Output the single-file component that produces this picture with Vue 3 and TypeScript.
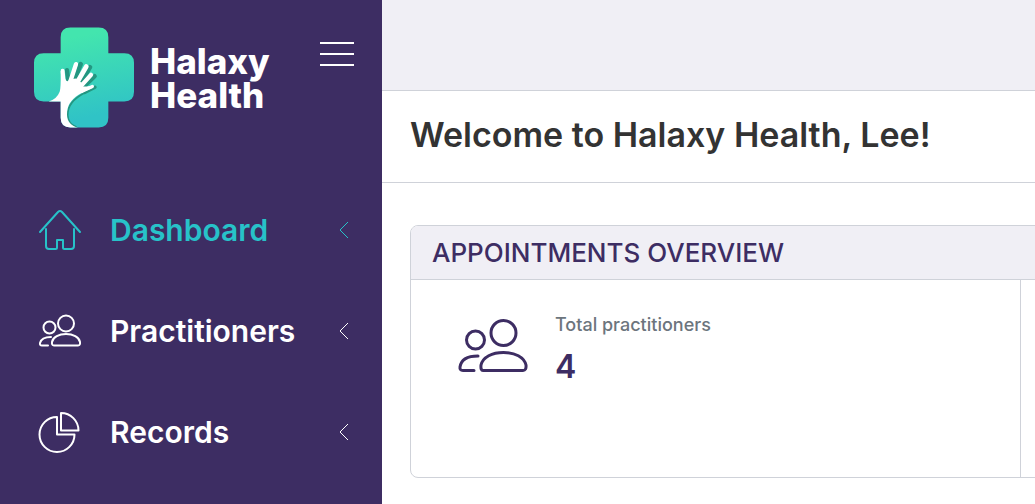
<script setup lang="ts">
import { ref } from 'vue'

type IconName = 'home' | 'people' | 'chart'

interface NavItem {
  label: string
  icon: IconName
}

const items: NavItem[] = [
  { label: 'Dashboard', icon: 'home' },
  { label: 'Practitioners', icon: 'people' },
  { label: 'Records', icon: 'chart' },
]

const active = ref('Dashboard')
const practitioners = ref(4)
</script>

<template>
  <div class="layout">
    <aside class="sidebar">
      <header class="brand">
        <svg class="mark" viewBox="42 37 300 300" aria-hidden="true">
          <defs>
            <linearGradient id="cross-fill" x1="0.35" y1="0" x2="0.55" y2="1">
              <stop offset="0.1" stop-color="#43e5ae" />
              <stop offset="0.9" stop-color="#30c3c6" />
            </linearGradient>
          </defs>
          <path
            fill="url(#cross-fill)"
            d="M151 37H236Q265 37 265 66V114H313Q342 114 342 143V230Q342 259 313 259H265V308Q265 337 236 337H151Q122 337 122 308V259H71Q42 259 42 230V143Q42 114 71 114H122V66Q122 37 151 37Z"
          />
          <g fill="none" stroke="#249681" stroke-linecap="round">
            <path stroke-width="13" d="M141 165L146 205" />
            <path stroke-width="14" d="M182 147L160 202" />
            <path stroke-width="14" d="M210 156L180 206" />
            <path stroke-width="13" d="M224 183L190 216" />
            <path stroke-width="10" d="M225 216L194 232" />
            <path stroke-width="5" d="M194 233C160 252 143 270 143 300C144 319 155 331 168 335" />
          </g>
          <g fill="none" stroke="#fff" stroke-linecap="round">
            <path stroke-width="12" d="M128 167L132 215" />
            <path stroke-width="13" d="M168 147L149 205" />
            <path stroke-width="14" d="M199 154L168 208" />
            <path stroke-width="13" d="M213 179L178 218" />
            <path stroke-width="10" d="M217 214L186 228" />
          </g>
          <path
            fill="#fff"
            d="M122 167L138 195Q143 203 148 192L169 190L174 196L188 204Q180 218 206 213L218 218Q190 230 176 239C151 255 141 273 141 299C141 319 155 335 174 337H151Q122 337 122 308V259H86Q110 253 119 230Q123 219 122 167Z"
          />
        </svg>
        <span class="name">Halaxy<br />Health</span>
        <button class="toggle" type="button" aria-label="Toggle menu">
          <svg viewBox="0 0 36 26" aria-hidden="true">
            <path d="M1 2H35M1 13H35M1 24H35" />
          </svg>
        </button>
      </header>

      <nav class="nav">
        <a
          v-for="item in items"
          :key="item.label"
          href="#"
          class="nav-item"
          :class="{ active: active === item.label }"
          @click.prevent="active = item.label"
        >
          <svg v-if="item.icon === 'home'" class="icon" viewBox="0 0 44 44" aria-hidden="true">
            <path d="M2 24L20 4Q22 2 24 4L42 24" />
            <path d="M8 21V38Q8 41 11 41H17.500Q19 41 19 39.500V32H25V39.500Q25 41 26.500 41H33Q36 41 36 38V21" />
          </svg>
          <svg v-else-if="item.icon === 'people'" class="icon" viewBox="0 0 44 44" aria-hidden="true">
            <circle cx="28" cy="14.500" r="8" />
            <circle cx="11.500" cy="18.500" r="6" />
            <path d="M16 36.500H40Q42.500 36.500 42 33C41 28 35 25 28 25S15 28 14 33Q13.500 36.500 16 36.500Z" />
            <path d="M13 28C6 28 3 30 2 34Q1.500 36.500 4 36.500H10" />
          </svg>
          <svg v-else class="icon" viewBox="0 0 44 44" aria-hidden="true">
            <path d="M19 7A17.500 17.500 0 1 0 36.500 24.500H19Z" />
            <path d="M23 3V20.500H40.500A17.500 17.500 0 0 0 23 3Z" />
          </svg>
          <span class="nav-label">{{ item.label }}</span>
          <svg class="chevron" viewBox="0 0 12 18" aria-hidden="true">
            <path d="M10 1L2 9L10 17" />
          </svg>
        </a>
      </nav>
    </aside>

    <div class="content">
      <div class="topbar"></div>
      <header class="welcome">
        <h1>Welcome to Halaxy Health, Lee!</h1>
      </header>
      <main class="main">
        <section class="card">
          <h2>APPOINTMENTS OVERVIEW</h2>
          <div class="stats">
            <div class="stat">
              <svg class="stat-icon" viewBox="0 0 72 56" aria-hidden="true">
                <circle cx="46.500" cy="15" r="12.500" />
                <circle cx="18.500" cy="22" r="9" />
                <path d="M26 52.500H66Q69.500 52.500 69 47C67 39 58 34.500 46.500 34.500S26 39 24 47Q23.500 52.500 26 52.500Z" />
                <path d="M21 38C10 38 4 42 3 49Q2.500 52.500 6 52.500H17" />
              </svg>
              <dl>
                <dt>Total practitioners</dt>
                <dd>{{ practitioners }}</dd>
              </dl>
            </div>
            <div class="stat"></div>
          </div>
        </section>
      </main>
    </div>
  </div>
</template>

<style>
body {
  margin: 0;
  background: #fff;
}
</style>

<style scoped>
.layout {
  display: grid;
  grid-template-columns: 382px minmax(0, 1fr);
  min-height: 100vh;
  overflow: hidden;
  font-family: Inter, "Liberation Sans", sans-serif;
  color: #3d2d63;
}

.sidebar {
  background: #3d2d63;
  color: #fff;
}

.brand {
  display: flex;
  align-items: flex-start;
  padding: 27px 27px 0 34px;
}

.mark {
  width: 100px;
  height: 101px;
}

.name {
  margin: 17px 0 0 16px;
  font-size: 35px;
  font-weight: 800;
  line-height: 34px;
}

.toggle {
  margin: 14px 0 0 auto;
  padding: 0;
  border: 0;
  background: none;
  color: inherit;
  cursor: pointer;
}

.toggle svg {
  display: block;
  width: 36px;
  height: 26px;
  fill: none;
  stroke: currentColor;
  stroke-width: 2;
}

.nav {
  margin-top: 51px;
}

.nav-item {
  display: flex;
  align-items: center;
  height: 101px;
  padding: 0 32px 0 38px;
  color: inherit;
  text-decoration: none;
}

.nav-item.active {
  color: #27c2c9;
}

.icon {
  width: 44px;
  height: 44px;
  fill: none;
  stroke: currentColor;
  stroke-width: 2;
  stroke-linecap: round;
  stroke-linejoin: round;
}

.nav-label {
  flex: 1;
  margin-left: 28px;
  font-size: 30px;
  font-weight: 600;
  line-height: 40px;
}

.chevron {
  width: 12px;
  height: 18px;
  fill: none;
  stroke: currentColor;
  stroke-width: 1;
}

.topbar {
  height: 90px;
  border-bottom: 1px solid #cfd2d9;
  background: #f0eff5;
}

.welcome {
  padding: 20px 28px 24px;
  border-bottom: 1px solid #cfd2d9;
}

h1 {
  margin: 0;
  color: #333;
  font-size: 34px;
  font-weight: 600;
  line-height: 47px;
  white-space: nowrap;
}

.main {
  padding: 42px 0 26px 28px;
}

.card {
  margin-right: -40px;
  border: 1px solid #cfd2d9;
  border-radius: 8px;
  overflow: hidden;
}

h2 {
  margin: 0;
  padding: 7px 21px 6px;
  border-bottom: 1px solid #cfd2d9;
  background: #f0eff5;
  font-size: 26px;
  font-weight: 500;
  line-height: 40px;
}

.stats {
  display: grid;
  grid-template-columns: minmax(0, 1fr) 54px;
}

.stat {
  display: flex;
  min-height: 197px;
}

.stat + .stat {
  border-left: 1px solid #cfd2d9;
}

.stat-icon {
  width: 72px;
  height: 56px;
  margin: 38px 0 0 46px;
  fill: none;
  stroke: #3d2d63;
  stroke-width: 3;
  stroke-linecap: round;
  stroke-linejoin: round;
}

dl {
  margin: 32px 0 0 26px;
}

dt {
  color: #6c757d;
  font-size: 18px;
  font-weight: 500;
  line-height: 26px;
}

dd {
  margin: 9px 0 0;
  font-size: 32px;
  font-weight: 600;
  line-height: 40px;
}
</style>
